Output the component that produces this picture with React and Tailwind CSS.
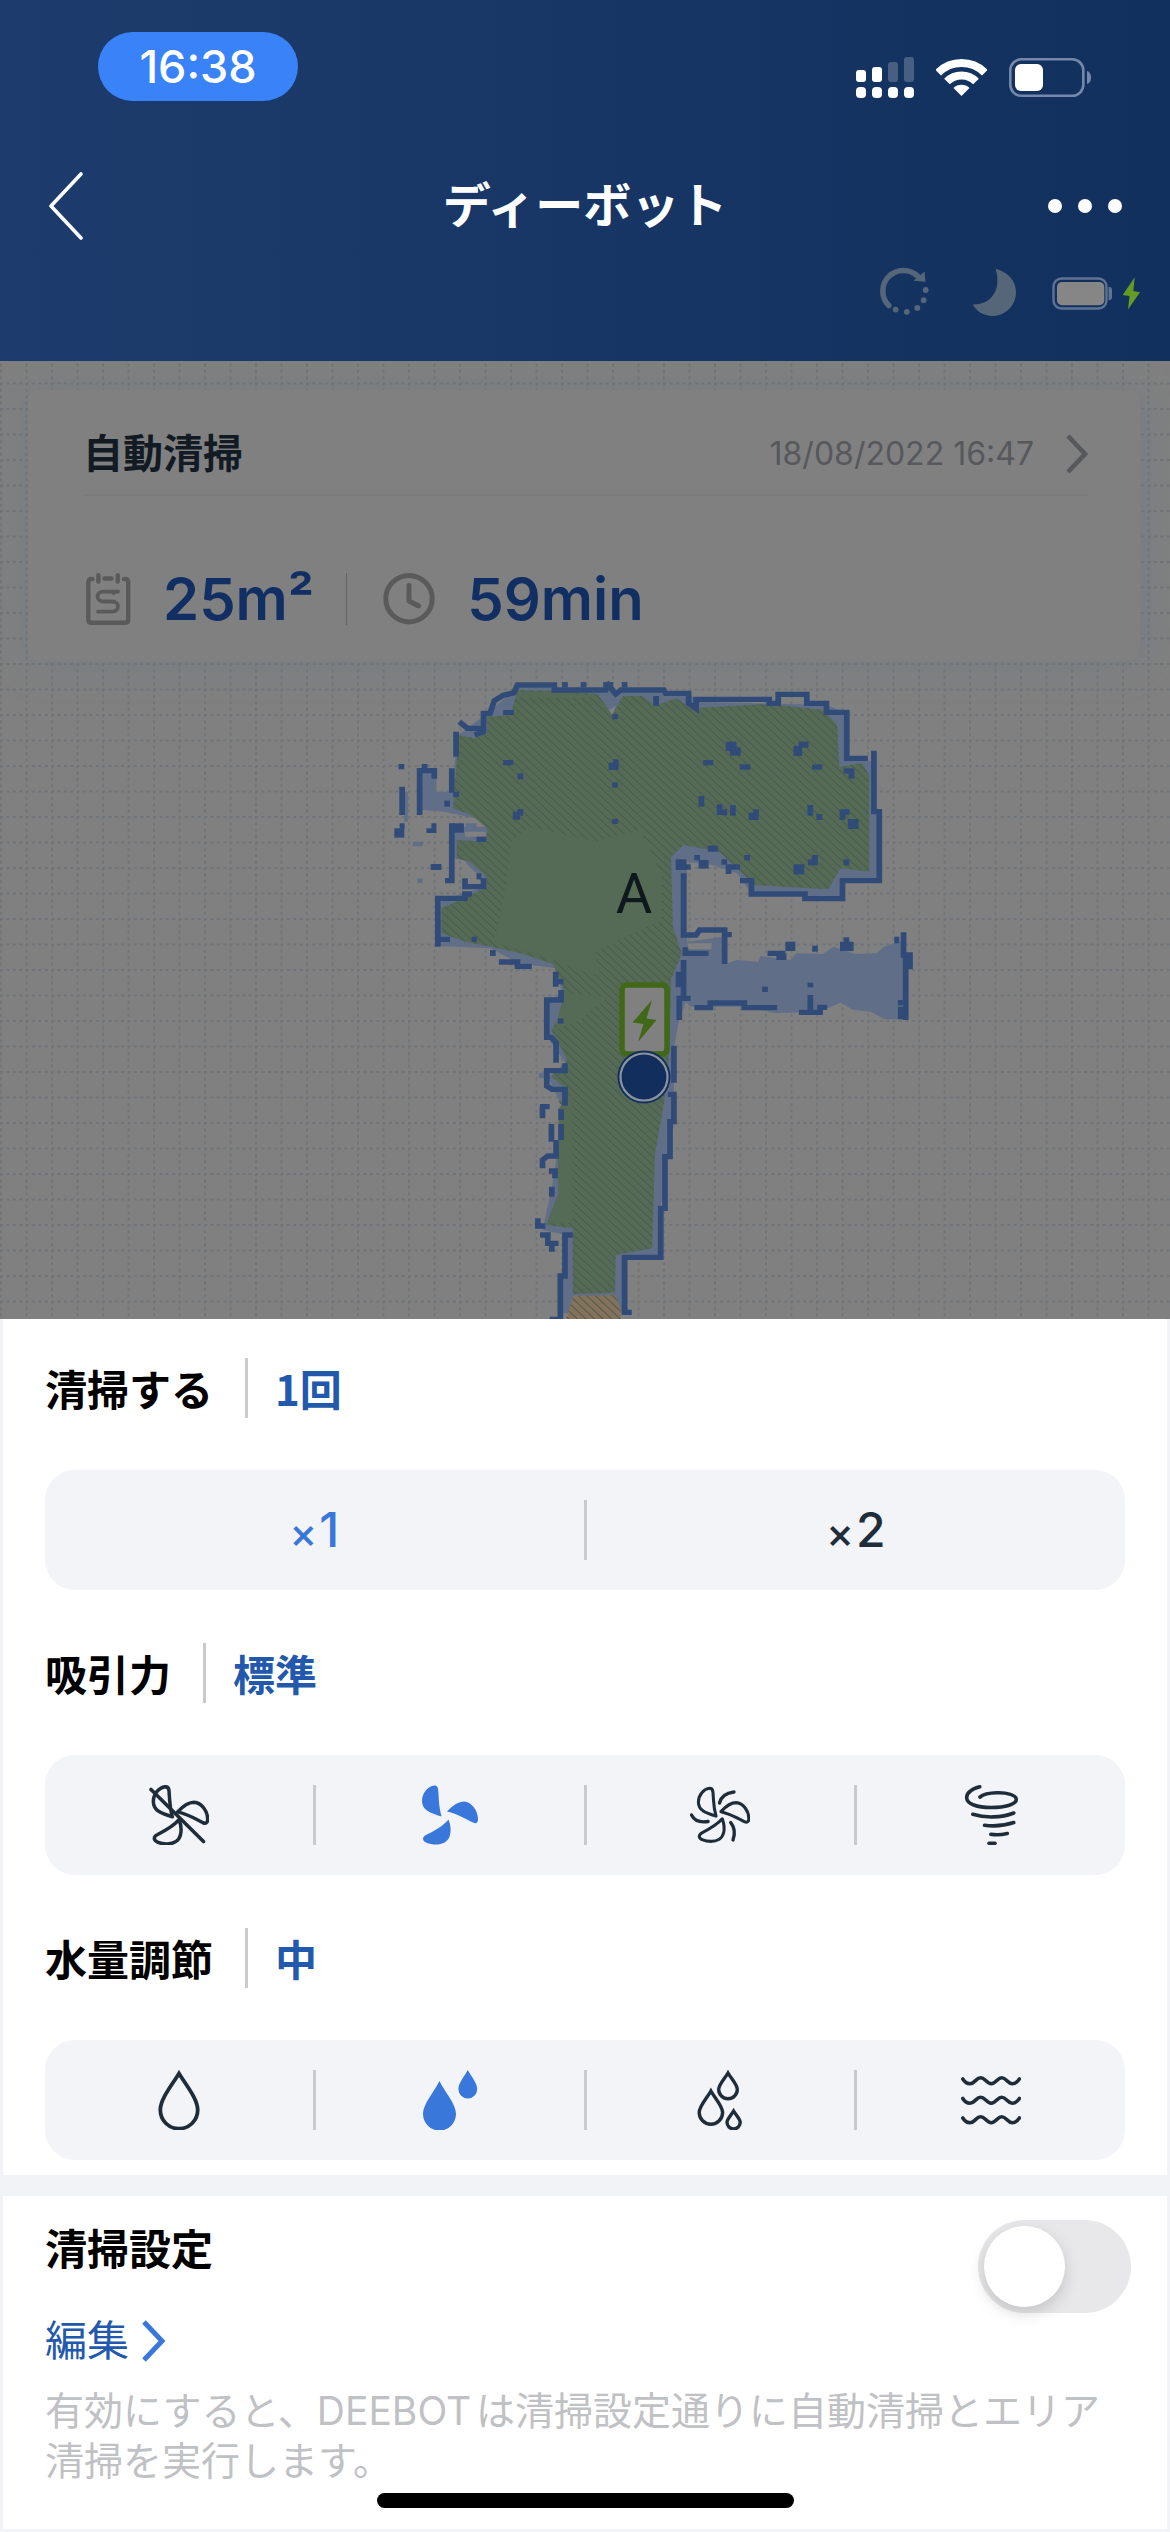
import { useState } from 'react'

const WALLS = [
  'M265 225 L290 215 V160 H308 L320 122 L345 106 L375 98 L385 75 H488 V90 H632 L640 76 L660 102 L675 90 H795 L800 100 H864 V130 L885 146 V118 H1090 V130 H1115 V103 H1195 V130 H1250 V157 H1307 V295 H1366',
  'M1383 272 V455 H1398 V662 H1295 V716 H1190 V702 H1040 V662 H1008',
  'M850 640 V825 H885 L895 810 H965 V912',
  'M965 824 H985 M855 862 V880 H920',
  'M850 900 V1015 H838 V1080 M836 935 V982 M850 1015 H870',
  'M823 1157 V1268 M806 1303 H823 V1385 H812 V1490 H798 V1645 H786 V1792 H685 V1957 H705',
  'M492 935 V980 M492 965 H514 M507 990 V1020 H467 V1132 H480 L493 1148 V1208',
  'M518 1210 V1232 H467 V1278 L482 1288 H518 V1337 M448 1340 H475 M455 1340 V1375 M507 1348 V1380',
  'M480 1392 V1445 M507 1392 V1440 M493 1440 V1488 H470 L455 1500 V1525 M473 1533 H490 V1555 M481 1580 V1610',
  'M442 1675 V1698 H463 M448 1725 H470 V1750 H500 M481 1750 V1775 M510 1725 H540 M518 1725 V1848 H505 V1978 H475',
  'M213 215 V290 M201 325 V398 M222 185 L245 205 H285 M111 465 V332 H152 V356 M62 380 V465',
  'M201 490 V662 H182 M238 655 V680 H290 V655 M258 702 H238 V715 H162 V860 M170 838 H196',
  'M333 906 H385 V919 H425',
  'M1466 817 V885 H1484 V928 M1472 885 V1080 M1458 1040 V1078',
  'M880 1043 H925 V1029 H1020 V1043 H1112 M1205 1005 V1057 M1173 1057 H1232 V1042 H1252 M1085 880 H1135',
]

// small obstacles: x, y, width, height
const OBSTACLES = [
  [345, 150, 30, 15], [650, 162, 16, 16], [765, 108, 16, 30], [345, 300, 28, 16],
  [385, 340, 16, 18], [640, 308, 28, 22], [652, 298, 16, 12], [650, 367, 16, 16],
  [372, 455, 20, 24], [385, 447, 16, 20], [650, 477, 16, 15], [968, 245, 30, 28],
  [980, 262, 30, 25], [905, 300, 28, 16], [1007, 313, 30, 16], [1158, 258, 24, 30],
  [1172, 245, 28, 18], [1210, 313, 28, 16], [1298, 325, 30, 16], [1312, 338, 16, 18],
  [892, 408, 16, 32], [943, 433, 16, 32], [958, 448, 14, 18], [980, 435, 16, 32],
  [1032, 458, 28, 22], [1045, 448, 16, 20], [1197, 435, 16, 32], [1222, 462, 16, 18],
  [1287, 448, 28, 16], [1287, 462, 16, 18], [1310, 477, 30, 30], [918, 557, 28, 18],
  [1020, 585, 16, 16], [1158, 613, 30, 30], [1198, 598, 28, 18], [1210, 585, 16, 16],
  [1298, 598, 16, 18], [828, 598, 30, 32], [855, 613, 15, 16], [880, 585, 16, 16],
  [892, 600, 28, 26], [956, 598, 16, 16], [968, 613, 40, 16], [968, 628, 16, 14],
  [52, 312, 16, 16], [117, 312, 16, 16], [180, 422, 16, 18], [205, 395, 16, 16],
  [40, 505, 28, 28], [55, 490, 14, 16], [130, 505, 28, 14], [144, 490, 14, 16],
  [142, 612, 30, 18], [270, 530, 28, 16], [205, 490, 30, 28], [257, 830, 14, 16],
  [308, 870, 16, 18], [270, 640, 14, 18], [1070, 980, 16, 16], [1197, 968, 16, 14],
  [1210, 857, 16, 18], [1135, 845, 28, 28], [1110, 880, 28, 20], [1288, 845, 38, 28],
  [1298, 832, 16, 16], [510, 66, 16, 16], [562, 66, 16, 16], [625, 66, 28, 16],
  [677, 66, 16, 16], [498, 1075, 16, 16], [1450, 1020, 14, 16], [1440, 830, 14, 20],
]

const CLEANED =
  'M385 90 L480 92 L610 102 L650 165 L680 108 L735 108 L770 138 L830 115 L870 145 L1090 132 L1240 150 L1280 195 L1286 320 L1350 310 L1370 345 V635 L1290 625 L1255 688 L1050 675 L950 575 L850 555 L815 590 L820 800 L845 880 L815 960 L810 1180 L795 1330 L770 1480 L762 1765 L660 1785 L658 1898 L540 1902 V1705 L465 1695 L500 1600 L498 1480 L520 1350 L500 1325 L525 1310 V1290 L480 1250 L525 1200 L480 1110 L515 1050 V990 L485 912 L400 882 L310 860 L240 845 L172 820 L172 745 L255 705 L300 680 L295 645 L250 605 L215 595 V540 L300 545 V505 L255 465 L205 445 L215 300 L220 225 L265 235 L300 220 V170 L365 165 Z'

const HomeMap = () => (
  <svg
    className="absolute inset-0 h-full w-full"
    viewBox="0 361 1170 958"
    preserveAspectRatio="xMidYMin slice"
    role="img"
    aria-label="マップ"
  >
    <defs>
      <pattern id="grid" width="25.5" height="25.5" patternUnits="userSpaceOnUse">
        <path d="M1 0 V25.5 M0 1 H25.5" stroke="#707377" strokeWidth="1.8" strokeDasharray="3.2 3.175" fill="none" />
      </pattern>
      <pattern id="hatch" width="17" height="17" patternUnits="userSpaceOnUse" patternTransform="rotate(45)">
        <path d="M0 4 H17" stroke="#46584a" strokeWidth="2.6" />
      </pattern>
    </defs>
    <rect y="361" width="1170" height="958" fill="#808080" />
    <rect y="361" width="1170" height="958" fill="url(#grid)" />

    <g transform="translate(380 660) scale(0.35714 0.33333)">
      {/* floor that was scanned but not cleaned */}
      <g fill="#606f87">
        <path d="M213 230 L300 160 L385 82 L865 95 L885 125 L1250 135 L1307 160 V295 L1383 305 V455 L1398 470 V660 L1295 665 V712 L1040 700 L1000 640 L930 615 L860 605 V1015 L838 1080 L823 1160 V1390 L786 1640 V1790 H685 V1960 H505 L518 1725 L455 1710 L480 1590 L495 1490 L510 1340 L470 1250 L520 1210 L467 1130 V1030 L510 1000 L492 925 L390 910 L310 865 L165 858 L172 720 L295 680 L235 600 L201 595 L205 500 H295 L290 480 L180 455 L115 450 V335 H158 V395 H205 Z" />
        <path d="M860 845 L958 830 L965 912 L1000 900 L1060 905 L1065 888 L1150 900 L1165 880 L1240 882 L1270 860 L1330 882 L1390 880 L1410 860 L1465 840 V1078 L1412 1078 L1375 1055 L1325 1050 L1290 1028 L1230 1055 L1110 1060 L1020 1040 H870 L850 1020 Z" />
        <path d="M92 545 h28 v14 h-28z M105 655 h14 v14 h-14z M68 395 h10 v90 h-10z M240 490 h30 v14 h-30z M445 1240 h14 v14 h-14z" />
      </g>
      <path d="M640 150 L650 165 L660 138 Z M862 850 H928 V868 H862 Z M238 515 H296 V530 H238 Z M240 615 L285 650 L240 652 Z" fill="#808080" />
      <path d={CLEANED} fill="#566b56" />
      <path d={CLEANED} fill="url(#hatch)" />
      <path
        d="M370 540 L420 500 L600 545 L730 510 L760 580 L790 650 V780 L690 830 L600 880 L620 950 L560 930 L430 880 L320 850 L345 720 Z M380 95 L480 95 L610 108 L560 115 L385 110 Z M515 1000 L640 1010 L560 1080 L490 1110 Z M500 1345 L540 1300 L540 1690 L470 1690 L500 1600 Z"
        fill="#566b56"
      />
      <path d="M540 1908 L658 1905 L675 1950 V1980 H520 Z" fill="#85725c" />
      <path d="M540 1908 L658 1905 L675 1950 V1980 H520 Z" fill="url(#hatch)" />
      <g fill="none" stroke="#304b78" strokeWidth="16">
        {WALLS.map((d) => (
          <path key={d} d={d} />
        ))}
      </g>
      <g fill="#304b78">
        {OBSTACLES.map(([x, y, w, h]) => (
          <rect key={`${x}-${y}`} x={x} y={y} width={w} height={h} />
        ))}
      </g>
    </g>

    <text x="634" y="913" textAnchor="middle" className="fill-[#0f181d] font-[Roboto,sans-serif] text-[56px]">
      A
    </text>

    {/* charging dock */}
    <rect x="622" y="985" width="45" height="69" rx="5" fill="#808080" stroke="#416818" strokeWidth="5.5" />
    <path d="M652 1000 L632.5 1022.5 L643.5 1024 L638 1042 L656.5 1020 L646.5 1018.5 Z" fill="#416818" />
    {/* robot */}
    <circle cx="644" cy="1077" r="26.5" fill="#112e5c" />
    <circle cx="644" cy="1077" r="23.5" fill="#112e5c" stroke="#8b939e" strokeWidth="2.2" />
  </svg>
)

const BLADES = [
  'M14.5 0.5 C17 0.5 18 2 18.2 5 L18.8 14 C19.2 21 20 26 21.6 31.5 C10 28 2 25 2 16 C2 8 8 1 14.5 0.5 Z',
  'M27 26.5 C33 20 39 16.5 44 16.5 C52 17 58 26 58 34 C58 38 56 39 53 37.5 C46 34 38 29 27 26.5 Z',
  'M28.5 34.5 C31 41 31 46 30 50 C28.5 57 22 59.5 16 59.5 C9 59.5 3 57 3 54 C3 52 4 51 6 50 C14 46 22 42 28.5 34.5 Z',
]

const FanOff = () => (
  <svg viewBox="0 0 60 60" className="size-[60px]" fill="none" stroke="currentColor" strokeWidth="3.6" strokeLinecap="round" strokeLinejoin="round">
    <g transform="translate(2.4 1.2) scale(0.97)">
      {BLADES.map((d) => <path key={d} d={d} />)}
    </g>
    <path d="M2 4.5 L54.5 56.5" />
  </svg>
)

const FanFilled = () => (
  <svg viewBox="0 0 60 60" className="size-[60px]" fill="currentColor">
    {BLADES.map((d) => <path key={d} d={d} />)}
  </svg>
)

const FanStrong = () => (
  <svg viewBox="0 0 60 60" className="size-[60px]" fill="none" stroke="currentColor" strokeWidth="3.4" strokeLinecap="round" strokeLinejoin="round">
    <g transform="translate(6.6 2.8) scale(0.9)">
      {BLADES.map((d) => <path key={d} d={d} />)}
    </g>
    <path d="M29.5 18 C31 12 36 8 44 7" />
    <path d="M1.5 30 C4 35 9 38 18 36.5" />
    <path d="M40.7 37.5 C45 43 45.5 48 43 55" />
  </svg>
)

const Tornado = () => (
  <svg viewBox="0 0 60 60" className="size-[60px]" fill="none" stroke="currentColor" strokeWidth="3.6" strokeLinecap="round">
    <path d="M18.7 1.8 C11 4 5.5 8 5.7 13 C6 19 16 22.5 30 22.5 C45 22.5 55.3 19 55.3 14.5 C55.3 10 46 7.5 36 7.8 C29 8 22 9.5 19 12" />
    <path d="M11.8 29.3 C24 33 40 33 52.8 28" />
    <path d="M23.5 40.3 C33 41.5 44 40.5 52.8 37.5" />
    <path d="M29.8 49.3 C35 50.2 41 49.8 46.3 48.5" />
    <path d="M28 58.2 H34" />
  </svg>
)

const DropLow = () => (
  <svg viewBox="0 0 60 60" className="size-[60px]" fill="none" stroke="currentColor" strokeWidth="3.8">
    <path d="M30 3.5 C37 15 48.7 29 48.7 40 A18.7 18.7 0 0 1 11.3 40 C11.3 29 23 15 30 3.5 Z" />
  </svg>
)

const DropMedium = () => (
  <svg viewBox="0 0 60 60" className="size-[60px]" fill="currentColor">
    <path d="M19.4 11 C25 22 36 34 36 44 A16.5 16.5 0 0 1 3 44 C3 34 14 22 19.4 11 Z" />
    <path d="M47.8 0 C51 6 57.2 13 57.2 19 A9.4 9.4 0 0 1 38.4 19 C38.4 13 44.6 6 47.8 0 Z" />
  </svg>
)

const DropHigh = () => (
  <svg viewBox="0 0 60 60" className="size-[60px]" fill="none" stroke="currentColor" strokeWidth="3.4">
    <path d="M38 3 C41.5 9 47.3 14.5 47.3 19.5 A9.3 9.3 0 0 1 28.7 19.5 C28.7 14.5 34.5 9 38 3 Z" />
    <path d="M20.9 21 C25 28.5 32.6 36 32.6 42.5 A11.7 11.7 0 0 1 9.2 42.5 C9.2 36 16.8 28.5 20.9 21 Z" />
    <path d="M43.6 41 C46 45 50.2 49 50.2 52.3 A6.6 6.6 0 0 1 37 52.3 C37 49 41.2 45 43.6 41 Z" />
  </svg>
)

const WAVE = 'M1.8 9 C4 12.5 6 13.7 9 13.7 C14 13.7 15 7.7 19.7 7.7 C24 7.7 25.5 13.7 30.3 13.7 C35 13.7 36.5 7.7 40.8 7.7 C45.5 7.7 46.5 13.7 51.3 13.7 C54 13.7 56 12.5 58.4 9'

const Waves = () => (
  <svg viewBox="0 0 60 60" className="size-[60px]" fill="none" stroke="currentColor" strokeWidth="3.6" strokeLinecap="round">
    <path d={WAVE} />
    <path d={WAVE} transform="translate(0 19.5)" />
    <path d={WAVE} transform="translate(0 39)" />
  </svg>
)

const Times = ({ n }) => (
  <span className="flex items-end gap-[2px] leading-[48px] font-medium">
    <span className="text-[42px] leading-[42px]">×</span>
    <span className="text-[48px]">{n}</span>
  </span>
)

const passes = [
  { label: '1回', icon: <Times n={1} /> },
  { label: '2回', icon: <Times n={2} /> },
]

const suction = [
  { label: '静音', icon: <FanOff /> },
  { label: '標準', icon: <FanFilled /> },
  { label: '強', icon: <FanStrong /> },
  { label: '最強', icon: <Tornado /> },
]

const water = [
  { label: '低', icon: <DropLow /> },
  { label: '中', icon: <DropMedium /> },
  { label: '高', icon: <DropHigh /> },
  { label: '最高', icon: <Waves /> },
]

const Setting = ({ title, options, initial }) => {
  const [selected, setSelected] = useState(initial)

  return (
    <section>
      <div className="flex items-center font-['Noto_Sans_CJK_JP',sans-serif] text-[42px] leading-[60px] font-bold">
        <h2 className="text-black">{title}</h2>
        <span className="mr-[27px] ml-8 h-[60px] w-[3px] bg-[#c9cacd]" />
        <span className="text-[#2259ac]">{options[selected].label}</span>
      </div>
      <div className="mt-[52px] flex h-[120px] items-center rounded-[30px] bg-[#f2f4f7]">
        {options.map((option, i) => (
          <button
            key={option.label}
            type="button"
            aria-label={option.label}
            aria-pressed={i === selected}
            onClick={() => setSelected(i)}
            className={`flex h-[60px] flex-1 items-center justify-center border-[#c9cacd] not-last:border-r-3 ${
              i === selected ? 'text-[#3977da]' : 'text-[#1f2d3a]'
            }`}
          >
            {option.icon}
          </button>
        ))}
      </div>
    </section>
  )
}

const Header = () => (
  <header className="bg-linear-to-r from-[#1d3c6d] to-[#12305d] pt-8 pb-11 text-white">
    <div className="flex items-end justify-between pr-[79px] pl-[98px]">
      <div className="w-[200px] rounded-full bg-[#3a82f7] text-center text-[45px] leading-[69px] font-medium">16:38</div>
      <div className="flex gap-[22px] pb-[3px]">
        <svg viewBox="0 0 58 41" className="h-[41px] w-[58px]" fill="#fff">
          <rect y="13" width="10" height="12" rx="3" />
          <rect x="16" y="10" width="10" height="15" rx="3" />
          <rect x="32" y="5" width="10" height="20" rx="3" opacity="0.22" />
          <rect x="48" width="10" height="25" rx="3" opacity="0.22" />
          <rect y="30" width="10" height="11" rx="4" />
          <rect x="16" y="30" width="10" height="11" rx="4" />
          <rect x="32" y="30" width="10" height="11" rx="4" />
          <rect x="48" y="30" width="10" height="11" rx="4" />
        </svg>
        <svg viewBox="0 0 51 41" className="h-[41px] w-[51px]" fill="none" stroke="#fff" strokeWidth="8">
          <path d="M2.2 15.7 A33 33 0 0 1 48.8 15.7" />
          <path d="M11 24.5 A20.5 20.5 0 0 1 40 24.5" />
          <path d="M25.5 39 L17.5 31 A11.5 11.5 0 0 1 33.5 31 Z" fill="#fff" stroke="none" />
        </svg>
        <svg viewBox="0 0 82 41" className="h-[41px] w-[82px]">
          <rect x="1.3" y="2.3" width="73" height="36.5" rx="11" fill="none" stroke="#7388ab" strokeWidth="2.6" />
          <rect x="6" y="7" width="28" height="27" rx="6" fill="#fff" />
          <path d="M78 14 C81.5 15.5 82 18 82 20.5 C82 23 81.5 25.5 78 27 Z" fill="#7388ab" />
        </svg>
      </div>
    </div>

    <div className="mt-[69px] grid h-[72px] grid-cols-[1fr_auto_1fr] items-center px-12">
      <button type="button" aria-label="戻る" className="justify-self-start">
        <svg viewBox="0 0 36 68" className="h-[68px] w-9" fill="none" stroke="#fff" strokeWidth="3.6" strokeLinecap="round" strokeLinejoin="round">
          <path d="M33 2 L3 34 L33 66" />
        </svg>
      </button>
      <h1 className="text-[48px] leading-[72px] font-bold">ディーボット</h1>
      <button type="button" aria-label="メニュー" className="justify-self-end">
        <svg viewBox="0 0 74 14" className="h-[14px] w-[74px]" fill="#fff">
          <circle cx="7" cy="7" r="7" />
          <circle cx="37" cy="7" r="7" />
          <circle cx="67" cy="7" r="7" />
        </svg>
      </button>
    </div>

    <div className="mt-[25px] flex justify-end gap-9 pr-[30px]">
      <svg viewBox="0 0 56 50" className="h-[50px] w-14" fill="#566679">
        <path d="M8.8 38.5 A20.5 20.5 0 0 1 38 9.5" fill="none" stroke="#566679" strokeWidth="5.5" strokeLinecap="round" />
        <path d="M44.5 4.5 L45.5 14.7 L33.5 13.8 Z" />
        <circle cx="45.7" cy="23" r="2.9" />
        <circle cx="43.7" cy="33.2" r="2.9" />
        <circle cx="37.3" cy="40.9" r="2.9" />
        <circle cx="26.8" cy="44.8" r="2.9" />
        <circle cx="15.6" cy="42.6" r="2.9" />
      </svg>
      <svg viewBox="0 0 44 50" className="h-[50px] w-11" fill="#566679">
        <path d="M23.5 1.8 C36 5 44 14 44 25 C44 39 33 49 20.5 49 C12 49 4 44 0.7 37.5 C20 38 30 22 23.5 1.8 Z" />
      </svg>
      <svg viewBox="0 0 88 50" className="h-[50px] w-[88px]">
        <rect x="1.5" y="11.5" width="53" height="30" rx="8" fill="none" stroke="#5d7391" strokeWidth="2.4" />
        <rect x="5" y="15" width="47.3" height="23.3" rx="5" fill="#868686" />
        <path d="M56.5 20 H57.5 Q60 20 60 23 V30 Q60 33 57.5 33 H56.5 Z" fill="#5d7391" />
        <path d="M82.7 10.3 L70.7 28 L77.5 29 L76 42.5 L88 25.2 L81.3 24 Z" fill="#659b24" />
      </svg>
    </div>
  </header>
)

const LastCleaning = () => (
  <article className="relative rounded-xl bg-[#808080] pr-[52px] pl-[55px] shadow-[0_0_36px_rgba(108,122,134,0.55)]">
    <a href="#log" className="flex h-[106px] items-center justify-between border-b-2 border-[#7a7b7c] pt-6">
      <h2 className="text-[40px] leading-[60px] font-bold text-[#121a24]">自動清掃</h2>
      <span className="flex items-center gap-8 text-[32px] leading-10 text-[#56585c]">
        18/08/2022 16:47
        <svg viewBox="0 0 22 40" className="h-10 w-[22px]" fill="none" stroke="#56585c" strokeWidth="4.6">
          <path d="M2 2 L19 20 L2 38" />
        </svg>
      </span>
    </a>
    <div className="flex items-center pt-[77px] pb-9 text-[58px] leading-[52px] font-semibold text-[#112f62]">
      <svg viewBox="0 0 45 52" className="ml-[3px] h-[52px] w-[45px]" fill="none" stroke="#5a5a5a" strokeWidth="4.4" strokeLinecap="round">
        <path d="M6.5 6 H5.5 Q2.3 6 2.3 9.5 V46.5 Q2.3 49.8 5.5 49.8 H39 Q42.2 49.8 42.2 46.5 V9.5 Q42.2 6 39 6 H38" />
        <path d="M12.4 2.3 V8.5 M31.7 2.3 V8.5 M18.5 5.5 H25.5" />
        <path d="M32 18.7 H17.5 C9.5 18.7 9.5 28.5 17.5 28.5 H26 C34 28.5 34 38.6 26 38.6 H12" strokeWidth="3.8" />
        <path d="M23 18 L34.5 17 L27.5 22.5 Z" fill="#5a5a5a" stroke="none" />
      </svg>
      <span className="ml-8">25m²</span>
      <span className="mr-9 ml-8 h-[52px] w-px bg-[#5f6267]" />
      <svg viewBox="0 0 52 52" className="size-[52px]" fill="none" stroke="#5a5a5a" strokeWidth="5" strokeLinecap="round" strokeLinejoin="round">
        <circle cx="26" cy="25.7" r="23.2" />
        <path d="M26 12.5 V28 L35.5 33" />
      </svg>
      <span className="ml-8">59min</span>
    </div>
  </article>
)

const App = () => {
  const [custom, setCustom] = useState(false)

  return (
    <div lang="ja" className="flex min-h-screen flex-col bg-[#f2f3f7] font-[Inter,'Noto_Sans_CJK_JP',sans-serif]">
      <Header />

      <div className="relative min-h-[600px] flex-1 overflow-hidden bg-[#808080] pt-[29px] pr-[30px] pl-7">
        <HomeMap />
        <LastCleaning />
      </div>

      <main className="px-[3px] pb-[3px]">
        <div className="flex flex-col gap-[53px] bg-white px-[42px] pt-[39px] pb-[15px]">
          <Setting title="清掃する" options={passes} initial={0} />
          <Setting title="吸引力" options={suction} initial={1} />
          <Setting title="水量調節" options={water} initial={1} />
        </div>

        <div className="mt-[21px] bg-white pt-6 pb-[21px]">
          <div className="flex items-start justify-between pr-9 pl-[42px]">
            <div className="flex flex-col gap-[31px] text-[42px] leading-[60px]">
              <label htmlFor="custom-cleaning" className="font-bold text-black">清掃設定</label>
              <a href="#edit" className="flex items-center gap-3 text-[#2259ac]">
                編集
                <svg viewBox="0 0 26 42" className="h-[42px] w-[26px]" fill="none" stroke="#3977da" strokeWidth="5">
                  <path d="M3 2 L21 21 L3 40" />
                </svg>
              </a>
            </div>
            <input
              id="custom-cleaning"
              type="checkbox"
              role="switch"
              checked={custom}
              onChange={(e) => setCustom(e.target.checked)}
              className="h-[93px] w-[153px] appearance-none rounded-full bg-[#e8e8ea] p-[6px] before:block before:size-[81px] before:rounded-full before:bg-white before:shadow-[0_6px_16px_rgba(0,0,0,0.16)] checked:bg-[#3977da] checked:before:ml-[60px]"
            />
          </div>
          <p className="mt-[15px] px-[42px] text-[39px] leading-[50px] text-[#bfc1c4] [text-autospace:normal]">
            有効にすると、DEEBOTは清掃設定通りに自動清掃とエリア清掃を実行します。
          </p>
          <div className="mx-auto mt-[7px] h-[15px] w-[417px] rounded-full bg-black" />
        </div>
      </main>
    </div>
  )
}

export default App
